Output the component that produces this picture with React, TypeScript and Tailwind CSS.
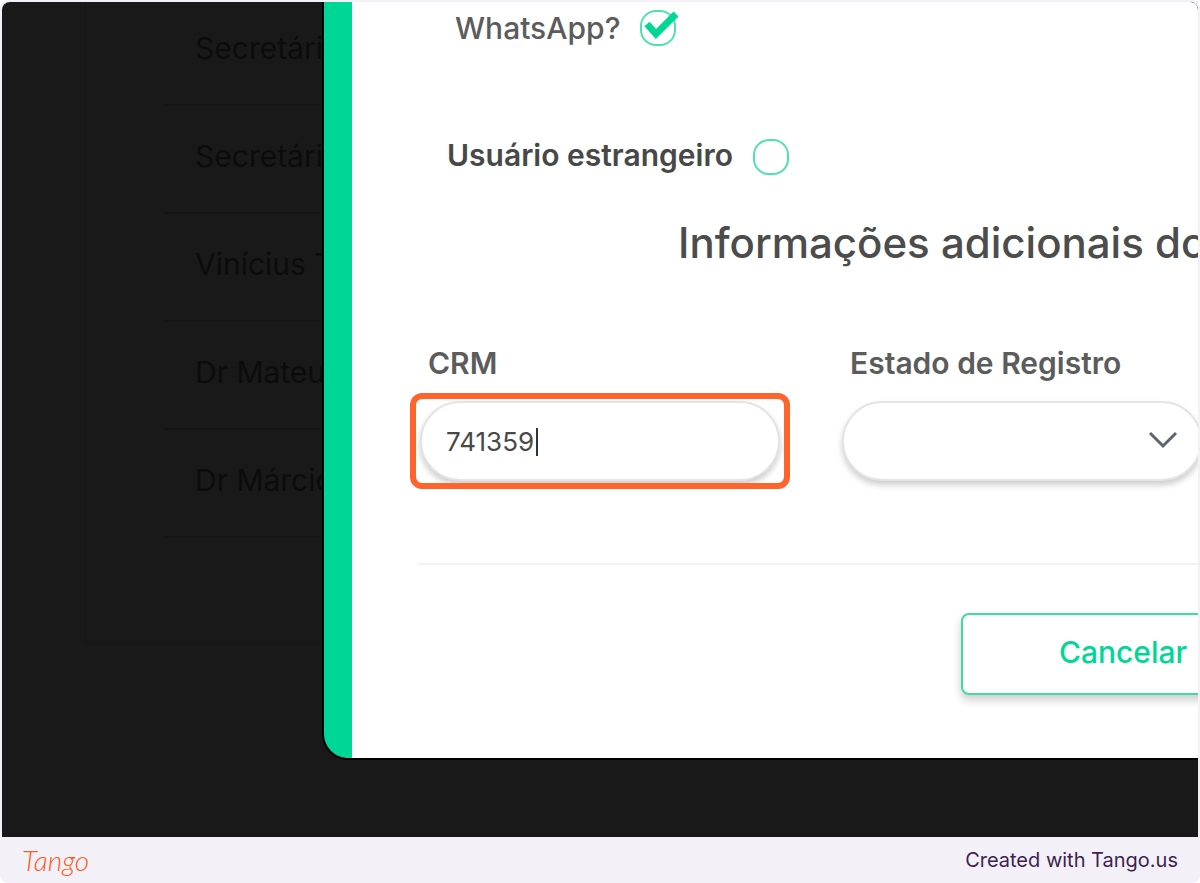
import React, { useState } from "react";

const users = ["Secretári", "Secretári", "Vinícius T", "Dr Mateu", "Dr Márcio"];

type CheckFieldProps = {
  id: string;
  label: string;
  labelClass: string;
  defaultChecked?: boolean;
};

const CheckField = ({ id, label, labelClass, defaultChecked = false }: CheckFieldProps) => {
  const [checked, setChecked] = useState(defaultChecked);

  return (
    <div className="flex items-center gap-5">
      <label htmlFor={id} className={labelClass}>
        {label}
      </label>
      <span className="relative flex">
        <input
          id={id}
          type="checkbox"
          checked={checked}
          onChange={(e) => setChecked(e.target.checked)}
          className="size-9 appearance-none rounded-2xl border-2 border-[#4fe0b0] bg-white"
        />
        {checked && (
          <svg viewBox="0 0 38 36" className="pointer-events-none absolute top-0 left-0 h-9 w-[38px]">
            <path d="M7 14 L16 24 L36 4" fill="none" stroke="#00d797" strokeWidth="7" />
          </svg>
        )}
      </span>
    </div>
  );
};

const UserList = () => (
  <aside className="w-[322px] shrink-0 overflow-hidden pl-[83px]">
    <div className="h-[646px] border-b-2 border-l border-[#161616] pl-[79px]">
      <ul className="-mt-1">
        {users.map((user, i) => (
          <li
            key={i}
            className="flex h-[108px] items-center border-b-2 border-[#151515] pb-1.5 pl-[30px] text-[30px] whitespace-nowrap text-[#0c0c0c]"
          >
            {user}
          </li>
        ))}
      </ul>
    </div>
  </aside>
);

const UserForm = () => {
  const [crm, setCrm] = useState("741359");
  const [uf, setUf] = useState("");

  return (
    <form
      onSubmit={(e) => e.preventDefault()}
      className="mb-[79px] min-w-0 flex-1 overflow-hidden rounded-bl-3xl border-l-[28px] border-[#00d797] bg-white pt-2 pb-[63px] shadow-[0_0_0_2px_#000]"
    >
      <div className="pl-[103px]">
        <CheckField
          id="whatsapp"
          label="WhatsApp?"
          labelClass="text-[30px] leading-9 font-medium text-[#5c5c5c]"
          defaultChecked
        />
      </div>
      <div className="mt-[93px] pl-[95px]">
        <CheckField
          id="estrangeiro"
          label="Usuário estrangeiro"
          labelClass="pb-1 text-[30px] leading-8 font-semibold text-[#484848]"
        />
      </div>

      <h2 className="mt-11 pl-[326px] text-[42px] leading-12 font-medium whitespace-nowrap text-[#4c4c4c]">
        Informações adicionais do
      </h2>

      <div className="mt-[78px] flex gap-[62px] pl-[68px]">
        <div className="w-[360px] shrink-0">
          <label htmlFor="crm" className="block pl-2 text-[30px] leading-9 font-semibold text-[#5c5c5c]">
            CRM
          </label>
          <div className="relative mt-5">
            <input
              id="crm"
              type="text"
              value={crm}
              onChange={(e) => setCrm(e.target.value)}
              className="h-20 w-full rounded-full border-2 border-[#e4e4e4] bg-white px-6 text-[26px] text-[#484848] caret-transparent shadow-[0_4px_6px_#0003] outline-none"
            />
            {/* text cursor */}
            <span className="pointer-events-none absolute top-[27px] left-[116px] h-7 w-0.5 bg-[#333]" />
            {/* step highlight */}
            <span className="pointer-events-none absolute -inset-x-[10px] -inset-y-2 rounded-xl border-6 border-[#ff642d]" />
          </div>
        </div>

        <div className="w-[360px] shrink-0">
          <label htmlFor="uf" className="block pl-2 text-[30px] leading-9 font-semibold text-[#5c5c5c]">
            Estado de Registro
          </label>
          <div className="relative mt-5">
            <select
              id="uf"
              value={uf}
              onChange={(e) => setUf(e.target.value)}
              className="h-20 w-full appearance-none rounded-full border-2 border-[#e4e4e4] bg-white px-6 text-[26px] shadow-[0_4px_6px_#0003]"
            >
              <option value=""></option>
            </select>
            <svg viewBox="0 0 30 18" className="pointer-events-none absolute top-[30px] right-6 h-[18px] w-[30px]">
              <path d="M2 2 L15 15 L28 2" fill="none" stroke="#5c6670" strokeWidth="3" />
            </svg>
          </div>
        </div>
      </div>

      <hr className="mt-[82px] ml-[66px] border-t-2 border-[#f3f3f3]" />

      <div className="mt-12 flex pl-[609px]">
        <button
          type="button"
          className="h-[82px] w-[324px] shrink-0 rounded-lg border-2 border-[#3edba3] bg-white pb-1 text-[30px] font-medium text-[#00d797] shadow-[0_5px_10px_#0003]"
        >
          Cancelar
        </button>
      </div>
    </form>
  );
};

export default function App() {
  return (
    <div className="min-h-screen bg-white font-['Inter','Liberation_Sans',sans-serif]">
      <div className="flex min-h-screen flex-col overflow-hidden rounded-lg bg-[#f3f1f7] px-0.5 pt-0.5">
        <main className="flex flex-1 overflow-hidden rounded-t-lg bg-[#191919]">
          <UserList />
          <UserForm />
        </main>
        <footer className="flex h-[46px] items-center justify-between px-5">
          <span className="font-['Lato',sans-serif] text-[28px] leading-8 font-light text-[#ff5a1f] italic">Tango</span>
          <span className="text-xl text-[#3e1f52]">Created with Tango.us</span>
        </footer>
      </div>
    </div>
  );
}
